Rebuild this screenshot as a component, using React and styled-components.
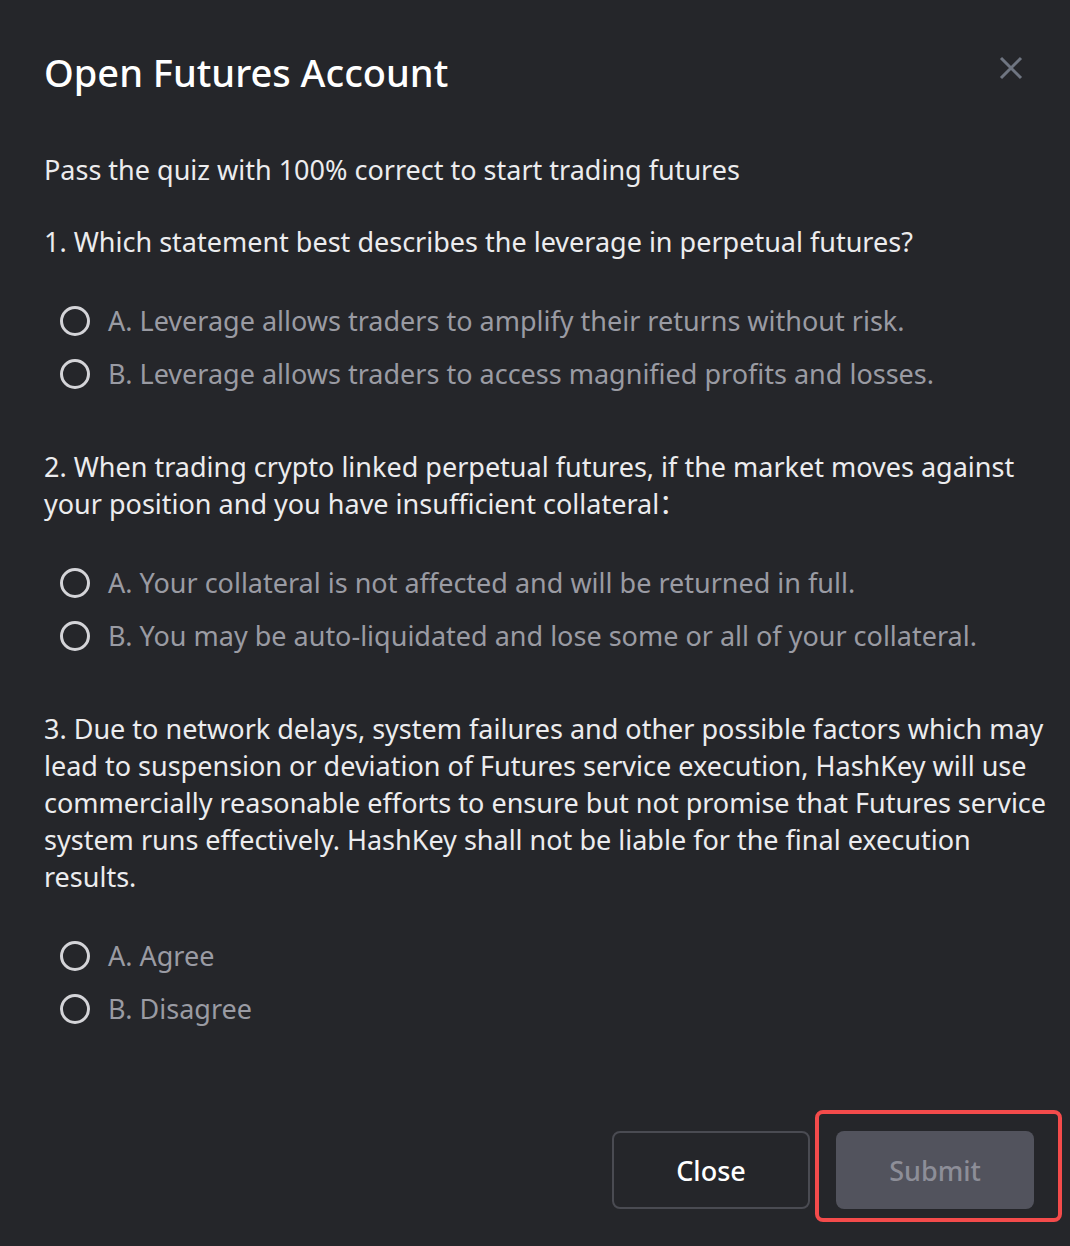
import React from "react";
import styled, { createGlobalStyle } from "styled-components";

const GlobalStyle = createGlobalStyle`
  html, body {
    margin: 0;
    padding: 0;
    background: #25262a;
  }
  body {
    font-family: "Noto Sans", "Noto Sans CJK SC", sans-serif;
    -webkit-font-smoothing: antialiased;
  }
`;

const Modal = styled.div`
  width: 1070px;
  height: 1246px;
  box-sizing: border-box;
  background: #25262a;
  padding: 44px 18px 0 44px;
  display: flex;
  flex-direction: column;
  position: relative;
`;

const Header = styled.div`
  display: flex;
  justify-content: space-between;
  align-items: flex-start;
`;

const Title = styled.h1`
  margin: 0;
  font-size: 38px;
  line-height: 56px;
  font-weight: 500;
  color: #ffffff;
`;

const CloseIcon = styled.button`
  background: none;
  border: 0;
  padding: 0;
  margin: 12px 29px 0 0;
  width: 24px;
  height: 24px;
  color: #6f7581;
  cursor: pointer;
`;

const Intro = styled.p`
  margin: 51px 0 0;
  font-size: 27px;
  line-height: 37px;
  color: #ececee;
`;

const Question = styled.p`
  margin: ${({ $first }) => ($first ? "35px" : "56px")} 0 0;
  font-size: 27px;
  line-height: 37px;
  color: #ececee;
`;

const Options = styled.div`
  margin-top: 42px;
  display: flex;
  flex-direction: column;
  gap: 16px;
`;

const Option = styled.label`
  display: flex;
  align-items: center;
  gap: 18px;
  padding-left: 16px;
  font-size: 27px;
  line-height: 37px;
  color: #9a9ba3;
  cursor: pointer;
`;

const Radio = styled.span`
  width: 24px;
  height: 24px;
  border: 3.5px solid #d4d4d8;
  border-radius: 50%;
  flex: none;
`;

const Footer = styled.div`
  margin-top: auto;
  margin-bottom: 37px;
  margin-right: 18px;
  display: flex;
  justify-content: flex-end;
  gap: 26px;
`;

const Button = styled.button`
  width: 198px;
  height: 78px;
  border-radius: 8px;
  font-family: inherit;
  font-size: 27px;
  font-weight: 500;
  box-sizing: border-box;
  border: ${({ $primary }) => ($primary ? "none" : "2px solid #4a4b52")};
  background: ${({ $primary }) => ($primary ? "#52535d" : "transparent")};
  color: ${({ $primary }) => ($primary ? "#8d8e98" : "#ffffff")};
`;

const Highlight = styled.div`
  position: absolute;
  left: 815px;
  top: 1110px;
  width: 247px;
  height: 112px;
  box-sizing: border-box;
  border: 4px solid #f44b4b;
  border-radius: 8px;
  pointer-events: none;
`;

const questions = [
  {
    text: "1. Which statement best describes the leverage in perpetual futures?",
    options: [
      "A. Leverage allows traders to amplify their returns without risk.",
      "B. Leverage allows traders to access magnified profits and losses.",
    ],
  },
  {
    text: "2. When trading crypto linked perpetual futures, if the market moves against your position and you have insufficient collateral：",
    options: [
      "A. Your collateral is not affected and will be returned in full.",
      "B. You may be auto-liquidated and lose some or all of your collateral.",
    ],
  },
  {
    text: "3. Due to network delays, system failures and other possible factors which may lead to suspension or deviation of Futures service execution, HashKey will use commercially reasonable efforts to ensure but not promise that Futures service system runs effectively. HashKey shall not be liable for the final execution results.",
    options: ["A. Agree", "B. Disagree"],
  },
];

const App = () => {
  return (
    <>
      <GlobalStyle />
      <Modal>
        <Header>
          <Title>Open Futures Account</Title>
          <CloseIcon aria-label="close">
            <svg width="24" height="24" viewBox="0 0 24 24" fill="none">
              <path
                d="M2 2L22 22M22 2L2 22"
                stroke="currentColor"
                strokeWidth="3"
              />
            </svg>
          </CloseIcon>
        </Header>
        <Intro>Pass the quiz with 100% correct to start trading futures</Intro>
        {questions.map((q, i) => (
          <React.Fragment key={i}>
            <Question $first={i === 0}>{q.text}</Question>
            <Options>
              {q.options.map((o) => (
                <Option key={o}>
                  <Radio />
                  {o}
                </Option>
              ))}
            </Options>
          </React.Fragment>
        ))}
        <Footer>
          <Button>Close</Button>
          <Button $primary>Submit</Button>
        </Footer>
        <Highlight />
      </Modal>
    </>
  );
};

export default App;
